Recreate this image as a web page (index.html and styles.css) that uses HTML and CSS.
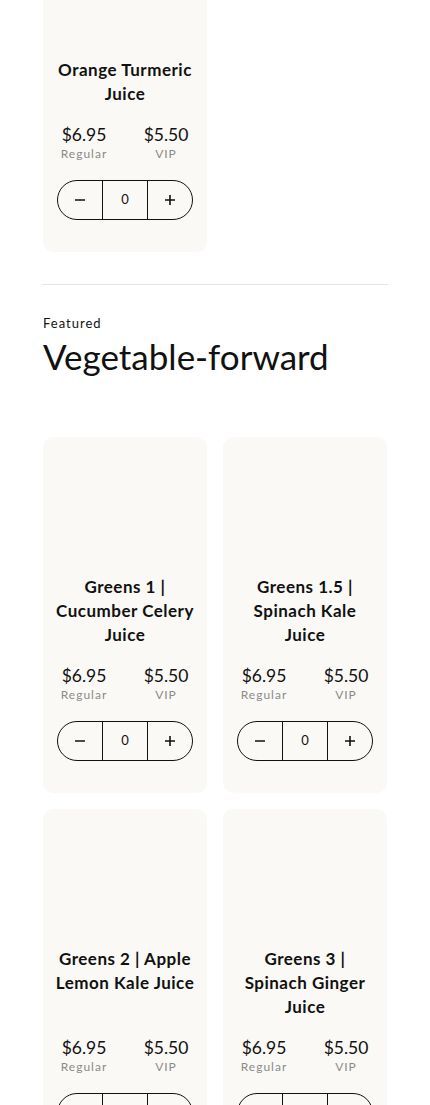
FILE: index.html
```html
<!DOCTYPE html>
<html lang="en">
<head>
    <meta charset="UTF-8">
    <meta name="viewport" content="width=device-width, initial-scale=1.0">
    <title>Juices</title>
    <link rel="stylesheet" href="styles.css">
</head>
<body>
    <main class="page">
        <section class="section section-prev">
            <div class="product-grid">
                <div class="card">
                    <div class="card-image"></div>
                    <h3 class="card-title">Orange Turmeric Juice</h3>
                    <div class="prices">
                        <div class="price"><span class="amount">$6.95</span><span class="label">Regular</span></div>
                        <div class="price"><span class="amount">$5.50</span><span class="label">VIP</span></div>
                    </div>
                    <div class="stepper">
                        <button class="step-btn" aria-label="Decrease">
                            <svg width="12" height="12" viewBox="0 0 12 12"><path d="M1 6h10" stroke="#111" stroke-width="1.6"/></svg>
                        </button>
                        <span class="qty">0</span>
                        <button class="step-btn" aria-label="Increase">
                            <svg width="12" height="12" viewBox="0 0 12 12"><path d="M1 6h10M6 1v10" stroke="#111" stroke-width="1.6"/></svg>
                        </button>
                    </div>
                </div>
            </div>
        </section>

        <hr class="divider">

        <section class="section">
            <p class="eyebrow">Featured</p>
            <h2 class="section-title">Vegetable-forward</h2>
            <div class="product-grid">
                <div class="card">
                    <div class="card-image"></div>
                    <h3 class="card-title">Greens 1 | Cucumber Celery Juice</h3>
                    <div class="prices">
                        <div class="price"><span class="amount">$6.95</span><span class="label">Regular</span></div>
                        <div class="price"><span class="amount">$5.50</span><span class="label">VIP</span></div>
                    </div>
                    <div class="stepper">
                        <button class="step-btn" aria-label="Decrease">
                            <svg width="12" height="12" viewBox="0 0 12 12"><path d="M1 6h10" stroke="#111" stroke-width="1.6"/></svg>
                        </button>
                        <span class="qty">0</span>
                        <button class="step-btn" aria-label="Increase">
                            <svg width="12" height="12" viewBox="0 0 12 12"><path d="M1 6h10M6 1v10" stroke="#111" stroke-width="1.6"/></svg>
                        </button>
                    </div>
                </div>
                <div class="card">
                    <div class="card-image"></div>
                    <h3 class="card-title">Greens 1.5 | Spinach Kale Juice</h3>
                    <div class="prices">
                        <div class="price"><span class="amount">$6.95</span><span class="label">Regular</span></div>
                        <div class="price"><span class="amount">$5.50</span><span class="label">VIP</span></div>
                    </div>
                    <div class="stepper">
                        <button class="step-btn" aria-label="Decrease">
                            <svg width="12" height="12" viewBox="0 0 12 12"><path d="M1 6h10" stroke="#111" stroke-width="1.6"/></svg>
                        </button>
                        <span class="qty">0</span>
                        <button class="step-btn" aria-label="Increase">
                            <svg width="12" height="12" viewBox="0 0 12 12"><path d="M1 6h10M6 1v10" stroke="#111" stroke-width="1.6"/></svg>
                        </button>
                    </div>
                </div>
                <div class="card">
                    <div class="card-image"></div>
                    <h3 class="card-title">Greens 2 | Apple Lemon Kale Juice</h3>
                    <div class="prices">
                        <div class="price"><span class="amount">$6.95</span><span class="label">Regular</span></div>
                        <div class="price"><span class="amount">$5.50</span><span class="label">VIP</span></div>
                    </div>
                    <div class="stepper">
                        <button class="step-btn" aria-label="Decrease">
                            <svg width="12" height="12" viewBox="0 0 12 12"><path d="M1 6h10" stroke="#111" stroke-width="1.6"/></svg>
                        </button>
                        <span class="qty">0</span>
                        <button class="step-btn" aria-label="Increase">
                            <svg width="12" height="12" viewBox="0 0 12 12"><path d="M1 6h10M6 1v10" stroke="#111" stroke-width="1.6"/></svg>
                        </button>
                    </div>
                </div>
                <div class="card">
                    <div class="card-image"></div>
                    <h3 class="card-title">Greens 3 | Spinach Ginger Juice</h3>
                    <div class="prices">
                        <div class="price"><span class="amount">$6.95</span><span class="label">Regular</span></div>
                        <div class="price"><span class="amount">$5.50</span><span class="label">VIP</span></div>
                    </div>
                    <div class="stepper">
                        <button class="step-btn" aria-label="Decrease">
                            <svg width="12" height="12" viewBox="0 0 12 12"><path d="M1 6h10" stroke="#111" stroke-width="1.6"/></svg>
                        </button>
                        <span class="qty">0</span>
                        <button class="step-btn" aria-label="Increase">
                            <svg width="12" height="12" viewBox="0 0 12 12"><path d="M1 6h10M6 1v10" stroke="#111" stroke-width="1.6"/></svg>
                        </button>
                    </div>
                </div>
            </div>
        </section>
    </main>
</body>
</html>
```

FILE: styles.css
```css
:root {
    --text: #111111;
    --muted: #8a8a8a;
    --card-bg: #faf9f6;
    --border: #e4e4e4;
}
* {
    margin: 0;
    padding: 0;
    box-sizing: border-box;
}
body {
    font-family: Lato, "Liberation Sans", sans-serif;
    color: var(--text);
    background-color: #ffffff;
}
.page {
    padding: 0 43px;
}

/* Sections */
.section-prev {
    margin-top: -80px;
}
.divider {
    border: none;
    border-top: 1px solid var(--border);
    margin: 32px -1px 0;
}
.eyebrow {
    margin-top: 29px;
    font-size: 13px;
    letter-spacing: 1px;
    line-height: 18px;
}
.section-title {
    margin-top: 3px;
    font-size: 35px;
    font-weight: 400;
    line-height: 42px;
    margin-bottom: 60px;
}

/* Product cards */
.product-grid {
    display: grid;
    grid-template-columns: 1fr 1fr;
    gap: 16px;
}
.card {
    display: flex;
    flex-direction: column;
    align-items: center;
    background-color: var(--card-bg);
    border-radius: 10px;
    padding: 12px 0 32px;
}
.card-image {
    height: 126px;
    width: 100%;
}
.card-title {
    flex: 1;
    width: 100%;
    padding: 0 12px;
    font-size: 17px;
    font-weight: 700;
    line-height: 24px;
    text-align: center;
    letter-spacing: 0.5px;
}
.prices {
    display: grid;
    grid-template-columns: 1fr 1fr;
    width: 100%;
    margin-top: 18px;
}
.price {
    display: flex;
    flex-direction: column;
    align-items: center;
}
.amount {
    font-size: 17.5px;
    line-height: 22px;
}
.label {
    font-size: 12px;
    line-height: 16px;
    letter-spacing: 1px;
    color: var(--muted);
}
.stepper {
    display: flex;
    margin-top: 18px;
    width: 136px;
    height: 40px;
    border: 1px solid var(--text);
    border-radius: 20px;
    overflow: hidden;
}
.step-btn {
    flex: 1;
    display: flex;
    align-items: center;
    justify-content: center;
    background: none;
    border: none;
    cursor: pointer;
}
.qty {
    flex: 1;
    display: flex;
    justify-content: center;
    padding-top: 10px;
    font-size: 13px;
    border-left: 1px solid var(--text);
    border-right: 1px solid var(--text);
}
```
